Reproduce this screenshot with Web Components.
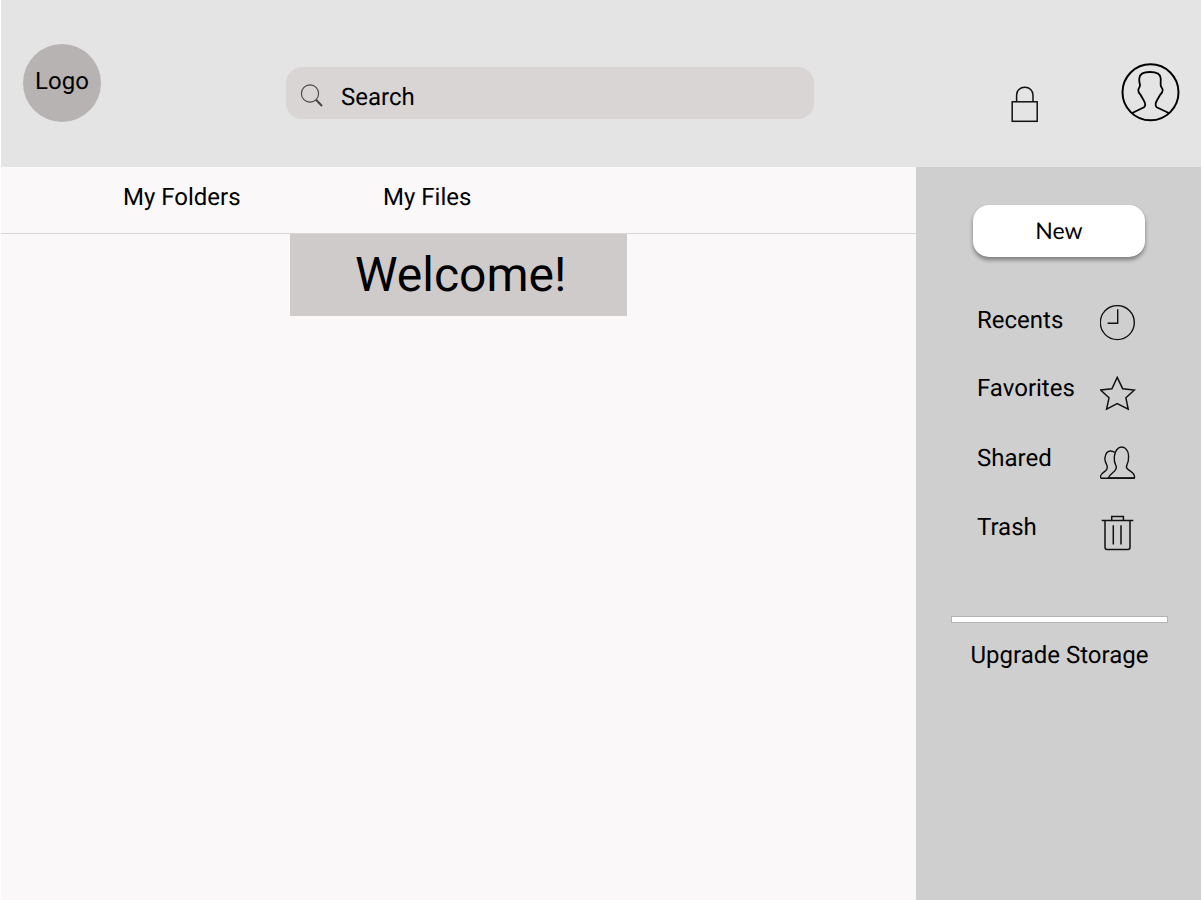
<!DOCTYPE html>
<html lang="en">
<head>
<meta charset="utf-8">
<title>Files</title>
<style>
  html, body {
    margin: 0;
    height: 100%;
    background: #fff;
  }
  body {
    font-family: Roboto, "Liberation Sans", sans-serif;
    color: #000;
    overflow: hidden;
    text-rendering: geometricPrecision;
  }
</style>
</head>
<body>
<app-shell>
  <app-header slot="header">
    <app-logo slot="logo">Logo</app-logo>
    <search-box slot="search">Search</search-box>
    <svg slot="lock" width="28" height="37" viewBox="0 0 28 37" fill="none" stroke="#111" stroke-width="1.5">
      <rect x="1.2" y="15.8" width="25" height="19.5"/>
      <path d="M5.6 15.8V9.2C5.6 4.6 9 1.2 13.8 1.2S22 4.6 22 9.2V15.8"/>
    </svg>
    <svg slot="user" width="60" height="60" viewBox="0 0 60 60" fill="none" stroke="#000">
      <circle cx="30.5" cy="30.3" r="28" stroke-width="2"/>
      <path stroke-width="1.8" stroke-linejoin="round" d="M11.7 51.3L24 45.3C25 44.5 25.4 42.8 25 41.3C24.4 38.5 22 35.8 20.7 33C19 31.5 18.2 29.5 18.3 28C18.4 26 20 25.5 20 23C19.6 20.5 19 19 19.3 16.3C19.6 12 24 10 30 10S40.4 12 40.7 16.3C41 19 40.4 20.5 40.7 23C40.7 25.5 42.6 26 42.7 28C42.8 29.5 41.5 31.5 40 33C38.6 35.8 36.4 38.5 35.7 41.3C35.4 42.8 35.8 44.5 36.7 45.3L49.3 51.3"/>
    </svg>
  </app-header>

  <app-nav slot="nav">
    <nav-tab style="--tab-x:122px">My Folders</nav-tab>
    <nav-tab style="--tab-x:142.5px">My Files</nav-tab>
  </app-nav>

  <welcome-banner slot="main">Welcome!</welcome-banner>

  <side-bar slot="side">
    <new-button slot="action">New</new-button>
    <side-item slot="items" style="--row:68px">Recents
      <svg slot="icon" width="36" height="36" viewBox="0 0 36 36" fill="none" stroke="#111" stroke-width="1.4">
        <circle cx="17.3" cy="17.6" r="17"/>
        <path d="M17.7 4.2V18.3H7.6"/>
      </svg>
    </side-item>
    <side-item slot="items" style="--row:70px">Favorites
      <svg slot="icon" width="36" height="35" viewBox="0 0 36 35" fill="none" stroke="#111" stroke-width="1.5" style="margin-top:3px">
        <path d="M17.2 1.4L22.7 12.7L34.4 14L25.9 21.8L28.2 33.2L17.2 27.7L6.6 33.2L9 21.8L.6 14L11.9 12.7Z"/>
      </svg>
    </side-item>
    <side-item slot="items" style="--row:69px">Shared
      <svg slot="icon" width="36" height="34" viewBox="0 0 36 34" fill="none" stroke="#111" stroke-width="1.4" stroke-linejoin="round" style="margin-top:3px">
        <path d="M8.3 32C9.5 28 14.8 26 15.6 23.6C16.4 22 17 20.8 15.8 19.4C14.8 17.5 14 14.5 14.3 11C14.6 5 18 1 21.7 1S28.6 5 28.6 10C28.8 14 28 17 26.8 19.4C26 21 26.6 22.6 28.3 23.6C31 25.5 34.5 27 34.5 30.6V32Z"/>
        <path d="M.6 32V30C1 27 5.6 25.5 6.7 23.4C7.6 21.5 7.6 20.5 6.6 18.6C5.2 16 4.6 13.5 5 11.5C5.6 7.5 8 5 10.6 5C12 5 13.4 5.4 14.6 6.4"/>
        <path d="M.6 32.2H34.5" stroke-width="1.6"/>
      </svg>
    </side-item>
    <side-item slot="items" style="--row:70px">Trash
      <svg slot="icon" width="36" height="36" viewBox="0 0 36 36" fill="none" stroke="#111" stroke-width="1.5" style="margin-top:3px">
        <path d="M1.7 5.4H33.3"/>
        <path d="M11.7 5.4V1.4H23.4V5.4"/>
        <path d="M5 5.4V32.3C5 33.6 5.8 34.4 7 34.4H28C29.2 34.4 30 33.6 30 32.3V5.4"/>
        <path d="M13.3 10.2V29.4M21 10.2V29.4"/>
      </svg>
    </side-item>
    <storage-meter slot="storage">Upgrade Storage</storage-meter>
  </side-bar>
</app-shell>

<script>
  function defineSimple(tag, css, html) {
    customElements.define(
      tag,
      class extends HTMLElement {
        connectedCallback() {
          const template = document.createElement('template');
          template.innerHTML = `<style>${css}</style>${html}`;
          this.attachShadow({ mode: 'open' });
          this.shadowRoot.appendChild(template.content.cloneNode(true));
        }
      }
    );
  }

  defineSimple('app-shell', `
    :host {
      display: grid;
      grid-template-columns: 915px 285px;
      grid-template-rows: 167px 733px;
      padding: 0 1px;
      height: 900px;
      box-sizing: border-box;
    }
    .header { grid-column: 1 / 3; }
    .left { background: #faf8f9; }
  `, `
    <div class="header"><slot name="header"></slot></div>
    <div class="left">
      <slot name="nav"></slot>
      <slot name="main"></slot>
    </div>
    <slot name="side"></slot>
  `);

  defineSimple('app-header', `
    :host {
      display: flex;
      align-items: flex-start;
      height: 167px;
      background: #e4e4e4;
    }
    ::slotted([slot=logo]) { margin: 44px 0 0 22px; }
    ::slotted([slot=search]) { margin: 67px 0 0 185px; }
    ::slotted([slot=lock]) { margin: 86px 0 0 197px; }
    ::slotted([slot=user]) { margin: 62px 0 0 81px; }
  `, `
    <slot name="logo"></slot>
    <slot name="search"></slot>
    <slot name="lock"></slot>
    <slot name="user"></slot>
  `);

  defineSimple('app-logo', `
    :host {
      display: block;
      width: 78px;
      height: 78px;
      border-radius: 50%;
      background: #b7b3b2;
      font-size: 24px;
      line-height: 74px;
      text-align: center;
    }
  `, `<slot></slot>`);

  defineSimple('search-box', `
    :host {
      display: flex;
      align-items: center;
      width: 528px;
      height: 52px;
      box-sizing: border-box;
      padding: 8px 0 0 13px;
      border-radius: 16px;
      background: #d8d5d4;
      font-size: 24px;
    }
    svg { margin: -2px 18px 0 0; }
  `, `
    <svg width="24" height="26" viewBox="0 0 24 26" fill="none" stroke="#444">
      <circle cx="11" cy="10.5" r="8.6" stroke-width="1.1"/>
      <path d="M17 16.8L23 23" stroke-width="2"/>
    </svg>
    <slot></slot>
  `);

  defineSimple('app-nav', `
    :host {
      display: flex;
      height: 67px;
      box-sizing: border-box;
      padding-top: 16px;
      border-bottom: 1px solid #d9d6d6;
    }
  `, `<slot></slot>`);

  defineSimple('nav-tab', `
    :host {
      display: block;
      margin-left: var(--tab-x);
      font-size: 24px;
      line-height: 28px;
    }
  `, `<slot></slot>`);

  defineSimple('welcome-banner', `
    :host {
      display: block;
      width: 337px;
      height: 82px;
      margin-left: 289px;
      box-sizing: border-box;
      padding-left: 65px;
      background: #cfcbca;
      font-size: 48px;
      line-height: 82px;
    }
  `, `<slot></slot>`);

  defineSimple('side-bar', `
    :host {
      display: block;
      background: #cfcfcf;
      padding-top: 38px;
    }
    .items { margin-top: 48px; }
    .storage { margin-top: 34px; }
  `, `
    <slot name="action"></slot>
    <div class="items"><slot name="items"></slot></div>
    <div class="storage"><slot name="storage"></slot></div>
  `);

  defineSimple('new-button', `
    :host {
      display: block;
      width: 172px;
      height: 52px;
      margin-left: 57px;
      border-radius: 16px;
      background: #fff;
      box-shadow: 0 3px 4px rgba(0, 0, 0, .4);
      font: 23px Lato, Roboto, sans-serif;
      line-height: 51px;
      text-align: center;
    }
  `, `<slot></slot>`);

  defineSimple('side-item', `
    :host {
      display: grid;
      grid-template-columns: 123px 36px;
      align-items: start;
      height: var(--row);
      padding-left: 61px;
      font-size: 24px;
      line-height: 28px;
    }
    .label { padding-top: 1px; }
  `, `
    <div class="label"><slot></slot></div>
    <slot name="icon"></slot>
  `);

  defineSimple('storage-meter', `
    :host {
      display: block;
      width: 217px;
      margin-left: 35px;
      font-size: 24px;
      line-height: 28px;
      text-align: center;
    }
    .bar {
      height: 7px;
      box-sizing: border-box;
      margin-bottom: 18px;
      border: 1px solid #b5b2b2;
      background: #fff;
    }
  `, `
    <div class="bar"></div>
    <slot></slot>
  `);
</script>
</body>
</html>
